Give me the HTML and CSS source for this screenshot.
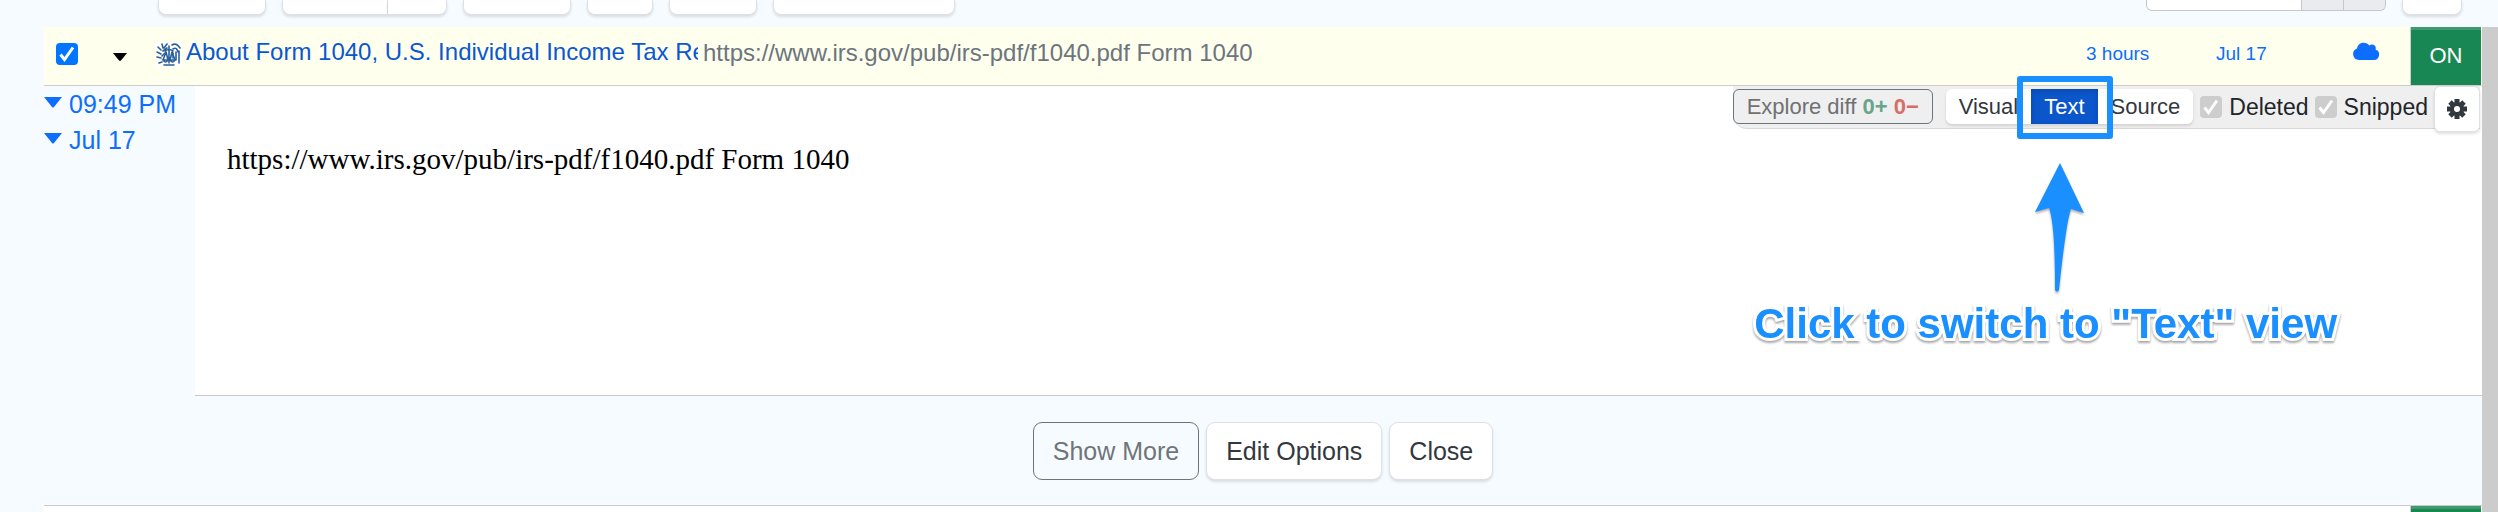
FILE: index.html
```html
<!DOCTYPE html>
<html lang="en">
  <head>
    <meta charset="UTF-8" />
    <meta name="viewport" content="width=device-width, initial-scale=1.0" />
    <title>Watch list</title>
    <link rel="stylesheet" href="styles.css">
  </head>
  <body>
    <header class="toolbar">
      <button class="btn w-md" aria-label="Add"></button>
      <div class="btn-group">
        <button class="btn btn-main" aria-label="Actions"></button>
        <button class="btn btn-more" aria-label="More actions"></button>
      </div>
      <button class="btn w-md" aria-label="Labels"></button>
      <button class="btn w-sm" aria-label="Refresh"></button>
      <button class="btn w-nm" aria-label="Sort"></button>
      <button class="btn w-lg" aria-label="Filter"></button>
      <div class="search">
        <input type="text" aria-label="Search">
        <button aria-label="Clear"></button>
        <button aria-label="Find"></button>
      </div>
      <button class="btn w-xs" aria-label="Menu"></button>
    </header>
    <div class="page">
      <main class="list">
        <div class="row">
          <input type="checkbox" class="check" aria-label="Select" checked>
          <button class="toggle" aria-label="Collapse">
            <svg width="14" height="8" viewBox="0 0 14 8"><path d="M0 0h14L8 7.500q-1 .8-2 0z"/></svg>
          </button>
          <svg class="favicon" width="25" height="25" viewBox="0 0 25 25">
            <rect width="25" height="25" fill="#fff"/>
            <g fill="none" stroke="#2a5f9a" stroke-width="1.600" stroke-linecap="round">
              <path d="M2 5l3 3M1 10l4 2M1 15l4 1M3 21l3-1M6 2l1 4M11 2L8 6M11 6L7 9M9 11l-3 3"/>
              <path d="M16 3c3-2 6 0 8 3M17 7c3-2 4 0 5 3M20 10v8M23 9v12M17 11v5"/>
              <path d="M13 4v17M9 9q4-3 8 0M10 10l-3 8M10 10l2 8M16 10l-2 8M16 10l3 8M7 18q3 4 5 0zM14 18q3 4 5 0zM8 23h10"/>
            </g>
          </svg>
          <a href="#" class="title">About Form 1040, U.S. Individual Income Tax Return</a>
          <span class="summary">https://www.irs.gov/pub/irs-pdf/f1040.pdf Form 1040</span>
          <a href="#" class="cell-time">3 hours</a>
          <a href="#" class="cell-date">Jul 17</a>
          <span class="cell-cloud">
            <svg width="26" height="20" viewBox="0 0 26 20" fill="#0d6efd"><path d="M6 19a6 6 0 0 1-2-11.600A7 7 0 0 1 16.500 4.500a3.700 3.700 0 0 1 6 4A5.400 5.400 0 0 1 20.500 19z"/></svg>
          </span>
          <button class="state">ON</button>
        </div>
        <div class="detail">
          <nav class="history">
            <a href="#"><svg width="18" height="11" viewBox="0 0 18 11"><path d="M0 0h18l-8 10q-1 1-2 0z"/></svg>09:49 PM</a>
            <a href="#"><svg width="18" height="11" viewBox="0 0 18 11"><path d="M0 0h18l-8 10q-1 1-2 0z"/></svg>Jul 17</a>
          </nav>
          <section class="content">
            <div class="view-bar">
              <button class="explore" disabled>Explore diff <b class="added">0+</b> <b class="removed">0−</b></button>
              <div class="views">
                <button class="view">Visual</button>
                <div class="view-current">
                  <button class="view active">Text</button>
                  <div class="marker"></div>
                  <svg class="arrow" width="50" height="132" viewBox="0 0 50 132"><path d="M25 0L49 50l-13-4Q31 60 24 127q-2 3-4 0Q20 60 14 45L0 49z"/></svg>
                  <div class="tip">Click to switch to "Text" view</div>
                </div>
                <button class="view">Source</button>
              </div>
              <input type="checkbox" id="deleted" class="check" checked disabled>
              <label for="deleted">Deleted</label>
              <input type="checkbox" id="snipped" class="check" checked disabled>
              <label for="snipped">Snipped</label>
              <button class="settings" aria-label="Settings">
                <svg width="20" height="20" viewBox="0 0 20 20">
                  <g stroke="#32383e" stroke-width="5"><path d="M10 0v4M10 16v4M0 10h4M16 10h4M3 3l3 3M14 14l3 3M17 3l-3 3M6 14l-3 3"/></g>
                  <circle cx="10" cy="10" r="5" fill="none" stroke="#32383e" stroke-width="4"/>
                </svg>
              </button>
            </div>
            <p class="text">https://www.irs.gov/pub/irs-pdf/f1040.pdf Form 1040</p>
          </section>
        </div>
        <div class="actions">
          <button class="action muted" disabled>Show More</button>
          <button class="action">Edit Options</button>
          <button class="action">Close</button>
        </div>
        <div class="next-row">
          <button class="state" aria-label="ON"></button>
        </div>
      </main>
      <div class="track"></div>
    </div>
  </body>
</html>
```
FILE: styles.css
```css
* {
  box-sizing: border-box;
}
body {
  display: flex;
  flex-direction: column;
  height: 100vh;
  margin: 0;
  overflow: hidden;
  background-color: #f6fbff;
  color: #212529;
  font-family: "Liberation Sans", Arial, sans-serif;
  font-size: 25px;
}
button,
input {
  margin: 0;
  font-family: inherit;
}
button {
  padding: 0;
  border: 0;
}
a {
  color: #0d6efd;
  text-decoration: none;
}

/* top toolbar */
.toolbar {
  display: flex;
  gap: 16px;
  height: 27px;
  padding: 0 20px 0 158px;
}
.btn {
  height: 15px;
  background-color: #fff;
  border: 1px solid #dde1e6;
  border-top: 0;
  border-radius: 0 0 8px 8px;
  box-shadow: 0 2px 3px rgba(0, 0, 0, 0.12);
}
.btn-group {
  display: flex;
}
.btn-main {
  width: 106px;
  border-bottom-right-radius: 0;
}
.btn-more {
  width: 59px;
  border-left: 0;
  border-bottom-left-radius: 0;
}
.w-xs {
  width: 60px;
}
.w-sm {
  width: 66px;
}
.w-nm {
  width: 88px;
}
.w-md {
  width: 108px;
}
.w-lg {
  width: 182px;
}
.toolbar > .w-xs {
  margin-right: 16px;
}
.search {
  display: flex;
  width: 240px;
  height: 11px;
  margin-left: auto;
  background-color: #e9ecef;
  border: 1px solid #c4c8cc;
  border-top: 0;
  border-radius: 0 0 6px 6px;
  overflow: hidden;
}
.search input {
  flex: 1;
  min-width: 0;
  border: 0;
  background-color: #fff;
}
.search button {
  width: 42px;
  background-color: #e9ebef;
  border-left: 1px solid #c4c8cc;
}

/* list */
.page {
  display: flex;
  flex: 1;
  min-height: 0;
  padding-left: 44px;
}
.list {
  display: flex;
  flex-direction: column;
  flex: 1;
  min-width: 0;
}
.track {
  width: 16px;
  background-color: #ccc;
}
.row {
  display: flex;
  align-items: flex-start;
  height: 59px;
  padding-left: 12px;
  background-color: #ffffee;
  border-bottom: 1px solid #ccc;
  line-height: 28px;
}
.check {
  flex: none;
  appearance: none;
  width: 22px;
  height: 22px;
  border-radius: 4px;
  background: #0075ff url("data:image/svg+xml,%3Csvg xmlns='http://www.w3.org/2000/svg' viewBox='0 0 22 22'%3E%3Cpath d='M4.500 11.500l4 5 8.500-12' fill='none' stroke='%23fff' stroke-width='3'/%3E%3C/svg%3E");
}
.check:disabled {
  background-color: #ccc;
  opacity: 0.95;
}
.row .check {
  margin-top: 16px;
}
.toggle {
  margin: 26px 29px 0 35px;
  height: 8px;
  background: none;
}
.toggle svg {
  display: block;
}
.favicon {
  flex: none;
  margin: 15px 5px 0 0;
}
.title {
  flex: none;
  width: 512px;
  margin: 11px 5px 0 0;
  overflow: hidden;
  white-space: nowrap;
  color: #0b57d0;
  font-size: 24px;
}
.summary {
  flex: 1;
  margin-top: 12px;
  overflow: hidden;
  white-space: nowrap;
  color: #6c757d;
  font-size: 24px;
}
.cell-time,
.cell-date {
  width: 130px;
  margin-top: 13px;
  font-size: 19px;
}
.cell-date {
  width: 137px;
}
.cell-cloud {
  width: 57px;
  margin-top: 14px;
}
.cell-cloud svg {
  display: block;
}
.state {
  width: 71px;
  height: 58px;
  margin-right: 1px;
  background-color: #198754;
  border-left: 1px solid #ccc;
  box-shadow: inset 0 3px 0 #3f9a6e;
  color: #fff;
  font-size: 22px;
}

/* open item */
.detail {
  display: flex;
  height: 310px;
}
.history {
  width: 151px;
}
.history a {
  display: flex;
  align-items: center;
  gap: 7px;
  height: 36px;
}
.history svg {
  margin-bottom: 4px;
  fill: #0d6efd;
}
.content {
  flex: 1;
  background-color: #fff;
  border-bottom: 1px solid #c8cacc;
}
.view-bar {
  display: flex;
  align-items: flex-start;
  width: fit-content;
  height: 43px;
  margin: 0 2px 0 auto;
  background-color: #efefef;
  border-bottom: 1px solid #d8d8d8;
  border-radius: 0 0 0 14px;
  font-size: 23px;
}
.explore {
  width: 200px;
  height: 35px;
  margin: 3px 13px 0 0;
  background: none;
  border: 1px solid #6c757d;
  border-radius: 6px;
  color: #6f7173;
  font-size: 22px;
}
.added {
  color: #68a58a;
}
.removed {
  color: #d56f69;
}
.views {
  display: flex;
  height: 35px;
  margin: 3px 7px 0 0;
  background-color: #fff;
  border-radius: 6px;
  box-shadow: 0 2px 3px rgba(0, 0, 0, 0.12);
}
.view {
  height: 35px;
  padding: 0 13px;
  background: none;
  color: #32383e;
  font-size: 22px;
}
.view.active {
  background-color: #0a56ca;
  box-shadow: inset 0 2px 5px rgba(0, 0, 0, 0.15);
  color: #fff;
}
.view-bar .check {
  margin: 10px 7px 0 0;
}
.view-bar label {
  margin: 8px 6px 0 0;
  line-height: 26px;
}
.settings {
  width: 46px;
  height: 46px;
  background-color: #fff;
  border: 1px solid #dde1e6;
  border-radius: 6px;
  box-shadow: 0 2px 3px rgba(0, 0, 0, 0.12);
}
.settings svg {
  display: block;
  margin: auto;
}
.text {
  margin: 13px 0 0 32px;
  font-family: "Liberation Serif", "Times New Roman", serif;
  font-size: 29px;
  line-height: 34px;
  color: #000;
}

/* hint over the page */
.view-current {
  position: relative;
}
.marker {
  position: absolute;
  top: -13px;
  left: -14px;
  width: 96px;
  height: 63px;
  border: 6px solid #1a8fff;
  border-radius: 3px;
  pointer-events: none;
}
.arrow {
  position: absolute;
  top: 74px;
  left: 4px;
  fill: #1a8fff;
  filter: drop-shadow(0 2px 1px rgba(0, 0, 0, 0.3));
}
.tip {
  position: absolute;
  top: 211px;
  left: -277px;
  color: #1a8fff;
  font-size: 42px;
  font-weight: bold;
  line-height: 48px;
  white-space: nowrap;
  -webkit-text-stroke: 6px #fff;
  paint-order: stroke fill;
  filter: drop-shadow(0 2px 1px rgba(0, 0, 0, 0.35));
}

/* bottom buttons */
.actions {
  display: flex;
  justify-content: center;
  gap: 7px;
  height: 110px;
  padding-top: 26px;
  border-bottom: 1px solid #ccc;
}
.action {
  height: 58px;
  padding: 0 19px;
  background-color: #fff;
  border: 1px solid #dde1e6;
  border-radius: 9px;
  box-shadow: 0 2px 3px rgba(0, 0, 0, 0.12);
  color: #32383e;
  font-size: 25px;
}
.action.muted {
  background: none;
  border-color: #6c757d;
  box-shadow: none;
  color: #6f7578;
}
.next-row {
  display: flex;
  justify-content: flex-end;
  flex: 1;
  min-height: 0;
  overflow: hidden;
  background-color: #fff;
}
```
